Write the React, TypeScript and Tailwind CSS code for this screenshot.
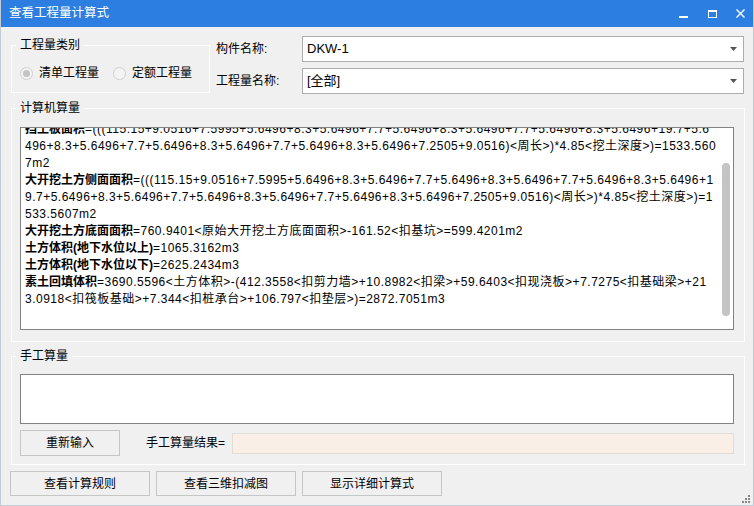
import React from "react";

const lines: { b?: string; t: string }[] = [
  { b: "挡土板面积", t: "=(((115.15+9.0516+7.5995+5.6496+8.3+5.6496+7.7+5.6496+8.3+5.6496+7.7+5.6496+8.3+5.6496+19.7+5.6" },
  { t: "496+8.3+5.6496+7.7+5.6496+8.3+5.6496+7.7+5.6496+8.3+5.6496+7.2505+9.0516)<周长>)*4.85<挖土深度>)=1533.560" },
  { t: "7m2" },
  { b: "大开挖土方侧面面积", t: "=(((115.15+9.0516+7.5995+5.6496+8.3+5.6496+7.7+5.6496+8.3+5.6496+7.7+5.6496+8.3+5.6496+1" },
  { t: "9.7+5.6496+8.3+5.6496+7.7+5.6496+8.3+5.6496+7.7+5.6496+8.3+5.6496+7.2505+9.0516)<周长>)*4.85<挖土深度>)=1" },
  { t: "533.5607m2" },
  { b: "大开挖土方底面面积", t: "=760.9401<原始大开挖土方底面面积>-161.52<扣基坑>=599.4201m2" },
  { b: "土方体积(地下水位以上)", t: "=1065.3162m3" },
  { b: "土方体积(地下水位以下)", t: "=2625.2434m3" },
  { b: "素土回填体积", t: "=3690.5596<土方体积>-(412.3558<扣剪力墙>+10.8982<扣梁>+59.6403<扣现浇板>+7.7275<扣基础梁>+21" },
  { t: "3.0918<扣筏板基础>+7.344<扣桩承台>+106.797<扣垫层>)=2872.7051m3" },
];

const Arrow = () => (
  <svg width="7" height="4" viewBox="0 0 7 4" className="mr-[6px]">
    <path d="M0 0h7L3.5 4z" fill="#555" />
  </svg>
);

const Radio = ({ checked }: { checked?: boolean }) => (
  <span className="w-[13px] h-[13px] rounded-full border border-[#cfcfcf] bg-[#f4f4f4] flex items-center justify-center">
    {checked && <span className="w-[7px] h-[7px] rounded-full bg-[#c4c4c4]" />}
  </span>
);

const Btn = ({ label, w }: { label: string; w: string }) => (
  <button className={`${w} h-[25px] border border-[#c6c6c6] bg-[#f0f0f0] text-[12px] text-black flex items-center justify-center`}>
    {label}
  </button>
);

export default function App() {
  return (
    <div className="w-[754px] h-[506px] bg-[#f0f0f0] border-x border-b border-[#c3cad5] flex flex-col font-['Liberation_Sans','Noto_Sans_CJK_SC',sans-serif] text-[12px] text-black relative overflow-hidden">
      {/* title bar */}
      <div className="h-[27px] -mx-px bg-[#2c7fe0] flex items-center pl-[9px] text-white shrink-0">
        <span className="text-[12.5px]">查看工程量计算式</span>
        <div className="ml-auto flex items-center h-full">
          <svg width="9" height="9" viewBox="0 0 9 9" className="mr-[20px] mt-[2px]">
            <rect x="0" y="6" width="9" height="2" fill="#fff" />
          </svg>
          <svg width="9" height="8" viewBox="0 0 9 8" className="mr-[19px]">
            <rect x="0.5" y="0.5" width="8" height="7" fill="none" stroke="#fff" />
            <rect x="0" y="0" width="9" height="2" fill="#fff" />
          </svg>
          <svg width="9" height="9" viewBox="0 0 9 9" className="mr-[9px]">
            <path d="M0.5 0.5l8 8M8.5 0.5l-8 8" stroke="#fff" strokeWidth="1.4" />
          </svg>
        </div>
      </div>

      <div className="flex flex-col pl-[10px]">
        {/* top row */}
        <div className="flex items-start mt-[9px]">
          <fieldset className="w-[199px] h-[56px] mt-px border border-white">
            <legend className="ml-[4px] px-[4px] leading-[16px]">工程量类别</legend>
            <div className="flex items-center pl-[8px] mt-[11px]">
              <Radio checked />
              <span className="ml-[6px]">清单工程量</span>
              <span className="ml-[14px]"><Radio /></span>
              <span className="ml-[6px]">定额工程量</span>
            </div>
          </fieldset>
          <div className="flex flex-col gap-[6px] ml-[6px]">
            <div className="flex items-center">
              <span className="w-[86px]">构件名称:</span>
              <div className="w-[442px] h-[26px] bg-white border border-[#acacac] flex items-center pl-[4px] text-[13px]">
                DKW-1
                <span className="ml-auto"><Arrow /></span>
              </div>
            </div>
            <div className="flex items-center">
              <span className="w-[86px]">工程量名称:</span>
              <div className="w-[442px] h-[26px] bg-white border border-[#acacac] flex items-center pl-[4px] text-[13px]">
                [全部]
                <span className="ml-auto"><Arrow /></span>
              </div>
            </div>
          </div>
        </div>

        {/* computed */}
        <fieldset className="w-[734px] h-[242px] mt-[6px] border border-white pl-[8px]">
          <legend className="-ml-[4px] px-[4px] leading-[16px]">计算机算量</legend>
          <div className="relative w-[714px] h-[203px] mt-[11px] bg-white border border-[#828282] overflow-hidden">
            <div className="-mt-[7px] pl-[4px]">
              {lines.map((l, i) => (
                <div key={i} className="h-[17px] leading-[17px] whitespace-nowrap">
                  {l.b && <b className="font-bold">{l.b}</b>}
                  <span className="tracking-[0.5px]">{l.t}</span>
                </div>
              ))}
            </div>
            <div className="absolute right-[3px] top-[35px] w-[8px] h-[153px] rounded-full bg-[#c4c4c4]" />
          </div>
        </fieldset>

        {/* manual */}
        <fieldset className="w-[734px] h-[117px] mt-[6px] border border-white pl-[8px]">
          <legend className="-ml-[4px] px-[4px] leading-[16px]">手工算量</legend>
          <div className="w-[714px] h-[50px] mt-[10px] bg-white border border-[#828282]" />
          <div className="flex items-center mt-[6px]">
            <Btn label="重新输入" w="w-[100px] h-[26px]" />
            <span className="ml-[26px] w-[86px]">手工算量结果=</span>
            <div className="w-[502px] h-[21px] bg-[#f9efe6] border border-[#e0dcd8]" />
          </div>
        </fieldset>

        {/* bottom buttons */}
        <div className="flex gap-[6px] mt-[6px] -ml-px">
          <Btn label="查看计算规则" w="w-[140px]" />
          <Btn label="查看三维扣减图" w="w-[140px]" />
          <Btn label="显示详细计算式" w="w-[140px]" />
        </div>
      </div>

      {/* resize grip */}
      <svg width="8" height="8" viewBox="0 0 8 8" className="absolute right-[3px] bottom-[2px]">
        <rect x="6" y="0" width="2" height="2" fill="#8a8a8a" />
        <rect x="3" y="3" width="2" height="2" fill="#8a8a8a" />
        <rect x="6" y="3" width="2" height="2" fill="#8a8a8a" />
        <rect x="0" y="6" width="2" height="2" fill="#8a8a8a" />
        <rect x="3" y="6" width="2" height="2" fill="#8a8a8a" />
        <rect x="6" y="6" width="2" height="2" fill="#8a8a8a" />
      </svg>
    </div>
  );
}
